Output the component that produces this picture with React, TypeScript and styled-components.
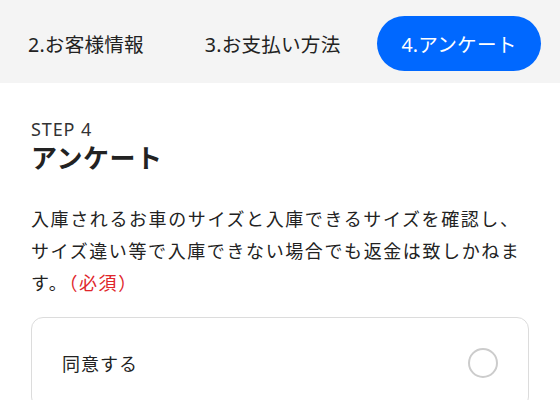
import React, { useState } from 'react';
import styled, { createGlobalStyle } from 'styled-components';

const GlobalStyle = createGlobalStyle`
  * {
    box-sizing: border-box;
  }

  body {
    margin: 0;
    background: #fff;
    color: #222;
    font-family: "Noto Sans", "Noto Sans CJK JP", sans-serif;
  }
`;

const Page = styled.div`
  width: 560px;
  min-height: 400px;
  overflow: hidden;
`;

const TabBar = styled.nav`
  display: flex;
  align-items: flex-start;
  gap: 13px;
  height: 83px;
  padding: 16px 0 0 4px;
  background: #f4f4f4;
  white-space: nowrap;
`;

const Tab = styled.div<{ $active?: boolean }>`
  display: flex;
  align-items: center;
  height: 55px;
  padding: 0 24px;
  border-radius: 28px;
  font-size: 19.6px;
  font-weight: 400;
  letter-spacing: 0.2px;
  color: ${(p) => (p.$active ? '#fff' : '#222')};
  background: ${(p) => (p.$active ? '#0068ff' : 'transparent')};
`;

const Content = styled.main`
  padding: 34px 31px 0;
`;

const StepLabel = styled.p`
  margin: 0;
  font-size: 18px;
  line-height: 24px;
  letter-spacing: 0.05em;
  color: #333;
`;

const Title = styled.h1`
  margin: 0;
  font-size: 26px;
  line-height: 34px;
  font-weight: 700;
  letter-spacing: 0.5px;
  color: #222;
`;

const Description = styled.p`
  margin: 28px 0 0;
  font-size: 18px;
  line-height: 32px;
  letter-spacing: 1.6px;
  color: #222;
`;

const Required = styled.span`
  color: #e0262b;
`;

const OptionList = styled.div`
  margin-top: 18px;
  border: 1px solid #dcdcdc;
  border-radius: 12px;
  overflow: hidden;
`;

const OptionRow = styled.label`
  display: flex;
  align-items: center;
  justify-content: space-between;
  height: 90px;
  padding: 0 30px;
  font-size: 18px;
  letter-spacing: 1px;
  color: #222;
  cursor: pointer;

  & + & {
    border-top: 1px solid #dcdcdc;
  }
`;

const Radio = styled.span<{ $checked?: boolean }>`
  width: 30px;
  height: 30px;
  border-radius: 50%;
  border: 2px solid ${(p) => (p.$checked ? '#0068ff' : '#cccccc')};
  box-shadow: ${(p) => (p.$checked ? 'inset 0 0 0 6px #fff' : 'none')};
  background: ${(p) => (p.$checked ? '#0068ff' : '#fff')};
`;

const tabs = ['2.お客様情報', '3.お支払い方法', '4.アンケート'];
const options = ['同意する'];

const App: React.FC = () => {
  const [selected, setSelected] = useState<number | null>(null);

  return (
    <Page>
      <GlobalStyle />
      <TabBar>
        {tabs.map((t, i) => (
          <Tab key={t} $active={i === tabs.length - 1}>
            {t}
          </Tab>
        ))}
      </TabBar>
      <Content>
        <StepLabel>STEP 4</StepLabel>
        <Title>アンケート</Title>
        <Description>
          入庫されるお車のサイズと入庫できるサイズを確認し、サイズ違い等で入庫できない場合でも返金は致しかねます。
          <Required>（必須）</Required>
        </Description>
        <OptionList>
          {options.map((o, i) => (
            <OptionRow key={o} onClick={() => setSelected(i)}>
              {o}
              <Radio $checked={selected === i} />
            </OptionRow>
          ))}
        </OptionList>
      </Content>
    </Page>
  );
};

export default App;
